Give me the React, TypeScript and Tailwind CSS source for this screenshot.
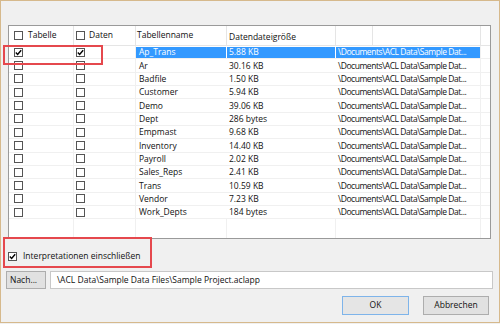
import { Fragment } from 'react'

const rows = [
  { name: 'Ap_Trans', size: '5.88 KB', checked: true },
  { name: 'Ar', size: '30.16 KB' },
  { name: 'Badfile', size: '1.50 KB' },
  { name: 'Customer', size: '5.94 KB' },
  { name: 'Demo', size: '39.06 KB' },
  { name: 'Dept', size: '286 bytes' },
  { name: 'Empmast', size: '9.68 KB' },
  { name: 'Inventory', size: '14.40 KB' },
  { name: 'Payroll', size: '2.02 KB' },
  { name: 'Sales_Reps', size: '2.41 KB' },
  { name: 'Trans', size: '10.59 KB' },
  { name: 'Vendor', size: '7.23 KB' },
  { name: 'Work_Depts', size: '184 bytes' },
]

const PATH = '\\Documents\\ACL Data\\Sample Dat...'

const Box = ({ checked }: { checked?: boolean }) => (
  <span className="flex h-[9px] w-[9px] shrink-0 items-center justify-center border border-[#555] bg-white">
    {checked && (
      <svg width="7" height="7" viewBox="0 0 7 7">
        <path d="M0.8 3.6 L2.6 5.4 L6.2 1.2" fill="none" stroke="#000" strokeWidth="1.4" />
      </svg>
    )}
  </span>
)

const App = () => {
  return (
    <div className="h-[324px] w-[500px] bg-[#f0f0f0] font-['Open_Sans',sans-serif] text-[8.5px] text-[#111]">
      <div className="relative flex h-[323px] w-[500px] flex-col border border-[#d6b98c]">
        {/* list */}
        <div className="ml-[7px] mt-[24px] flex h-[214px] w-[483px] flex-col border border-[#9a9a9a] bg-white">
          {/* header */}
          <div className="flex h-[20px] shrink-0 border-b border-[#e5e5e5]">
            <div className="flex w-[65px] items-center gap-[5px] border-r border-[#e5e5e5] pl-[5px]">
              <Box />
              <span>Tabelle</span>
            </div>
            <div className="flex w-[62px] items-center gap-[4px] border-r border-[#e5e5e5] pl-[2px]">
              <Box />
              <span>Daten</span>
            </div>
            <div className="flex w-[91px] items-center border-r border-[#e5e5e5] pl-[1px]">Tabellenname</div>
            <div className="flex w-[109px] items-center border-r border-[#e5e5e5] pl-[2px] pt-[4px]">Datendateigröße</div>
            <div className="flex w-[145px] border-r border-[#e5e5e5]">
              <div className="w-[37px] border-r border-[#e5e5e5]" />
            </div>
            <div className="flex-1" />
          </div>

          {/* body */}
          {rows.map((r, i) => {
            const sel = i === 0
            return (
              <Fragment key={r.name}>
                <div className="flex h-[13.33px] shrink-0 border-b border-[#f0f0f0] leading-none">
                  <div className="flex w-[65px] items-center border-r border-[#f0f0f0] pl-[5px]">
                    <Box checked={r.checked} />
                  </div>
                  <div className="flex w-[62px] items-center border-r border-[#f0f0f0] pl-[2px]">
                    <Box checked={r.checked} />
                  </div>
                  <div className="flex w-[91px] border-r border-white pt-[1px]">
                    <div className={`flex flex-1 items-center pl-[3px] ${sel ? 'bg-[#3399ff] text-white' : ''}`}>{r.name}</div>
                  </div>
                  <div className="flex w-[109px] border-r border-white pt-[1px]">
                    <div className={`flex flex-1 items-center pl-[2px] ${sel ? 'bg-[#3399ff] text-white' : ''}`}>{r.size}</div>
                  </div>
                  <div className="flex w-[145px] border-r border-[#f0f0f0] pt-[1px]">
                    <div className={`flex min-w-0 flex-1 items-center overflow-hidden whitespace-nowrap pl-[2px] tracking-[-0.45px] ${sel ? 'bg-[#3399ff] text-white' : ''}`}>{PATH}</div>
                  </div>
                  <div className="flex-1" />
                </div>
              </Fragment>
            )
          })}
          <div className="flex flex-1">
            <div className="w-[65px] border-r border-[#f0f0f0]" />
            <div className="w-[62px] border-r border-[#f0f0f0]" />
            <div className="w-[91px] border-r border-[#f0f0f0]" />
            <div className="w-[109px] border-r border-[#f0f0f0]" />
            <div className="w-[145px] border-r border-[#f0f0f0]" />
            <div className="flex-1" />
          </div>
        </div>

        {/* include interpretations */}
        <div className="ml-[7px] mt-[9px] flex h-[17px] items-center gap-[6px]">
          <Box checked />
          <span>Interpretationen einschließen</span>
        </div>

        {/* browse row */}
        <div className="ml-[5px] mt-[6px] flex h-[18px] gap-[4px]">
          <button className="w-[40px] border border-[#adadad] bg-[#e1e1e1] pl-[3px] text-left">Nach...</button>
          <div className="flex w-[443px] items-center border border-[#c8c8c8] bg-white pl-[6px]">
            \ACL Data\Sample Data Files\Sample Project.aclapp
          </div>
        </div>

        {/* buttons */}
        <div className="mr-[10px] mt-[7px] flex h-[19px] justify-end gap-[14px]">
          <button className="w-[67px] border border-[#7eb4ea] bg-[#e5e5e5]">OK</button>
          <button className="w-[66px] border border-[#adadad] bg-[#e1e1e1]">Abbrechen</button>
        </div>

        {/* annotation boxes */}
        <div className="absolute left-[2px] top-[44px] h-[20px] w-[100px] border-2 border-[#e5484d]" />
        <div className="absolute left-[2px] top-[236px] h-[31px] w-[149px] border-2 border-[#e5484d]" />
      </div>
    </div>
  )
}

export default App
